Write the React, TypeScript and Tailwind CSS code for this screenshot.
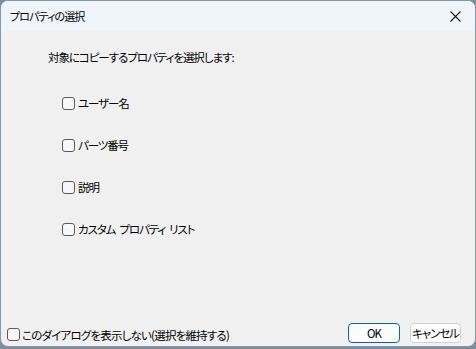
import React from "react";

const font = "font-['Noto_Sans_CJK_JP','Noto_Sans',sans-serif] [font-feature-settings:'palt'] tracking-[-1.1px]";

function Box() {
  return <span className="inline-block w-[13px] h-[13px] rounded-[3px] border border-[#5b5b5b] bg-[#f7f7f7] shrink-0" />;
}

function Row({ label }: { label: string }) {
  return (
    <div className="flex items-center h-[16px] gap-[3px]">
      <Box />
      <span className="text-[11.5px] leading-[16px] text-black whitespace-pre [word-spacing:2.5px]">{label}</span>
    </div>
  );
}

export default function App() {
  return (
    <div className={`w-[476px] h-[349px] bg-[#7c8d9d] ${font}`}>
      <div className="w-[476px] h-[347px] rounded-[8px] border border-[#8797a6] overflow-hidden flex flex-col bg-[#f0f0f0]">
        <div className="h-[30px] bg-[#eef4f9] flex items-center justify-between pl-[9px] pr-[10px] shrink-0">
          <span className="text-[11px] leading-[16px] tracking-[-0.9px] text-black">プロパティの選択</span>
          <svg width="11" height="11" viewBox="0 0 11 11" className="mr-[4px]">
            <path d="M0.5 0.5 L10.5 10.5 M10.5 0.5 L0.5 10.5" stroke="#1a1a1a" strokeWidth="1.1" fill="none" />
          </svg>
        </div>
        <div className="flex-1 flex flex-col">
          <div className="pl-[47px] pt-[18px] text-[11.5px] leading-[16px] tracking-[-1.05px] text-black">
            対象にコピーするプロパティを選択します:
          </div>
          <div className="pl-[61px] pt-[30px] flex flex-col gap-[26px]">
            <Row label="ユーザー名" />
            <Row label="パーツ番号" />
            <Row label="説明" />
            <Row label="カスタム プロパティ リスト" />
          </div>
          <div className="flex-1" />
          <div className="flex items-center justify-between pl-[6px] pr-[14px] pb-[3px]">
            <div className="flex items-center gap-[2px] mt-[3px]">
              <Box />
              <span className="text-[11.5px] leading-[16px] tracking-[-0.8px] text-black whitespace-nowrap">このダイアログを表示しない(選択を維持する)</span>
            </div>
            <div className="flex items-center gap-[10px]">
              <button className="w-[52px] h-[20px] rounded-[4px] border border-[#0067c0] bg-[#fdfdfd] text-[11.5px] leading-[16px] text-black flex items-center justify-center whitespace-nowrap">OK</button>
              <button className="w-[51px] h-[20px] rounded-[4px] border border-[#d0d0d0] bg-[#fdfdfd] text-[11.5px] leading-[16px] text-black flex items-center justify-center whitespace-nowrap px-0">キャンセル</button>
            </div>
          </div>
        </div>
      </div>
    </div>
  );
}
